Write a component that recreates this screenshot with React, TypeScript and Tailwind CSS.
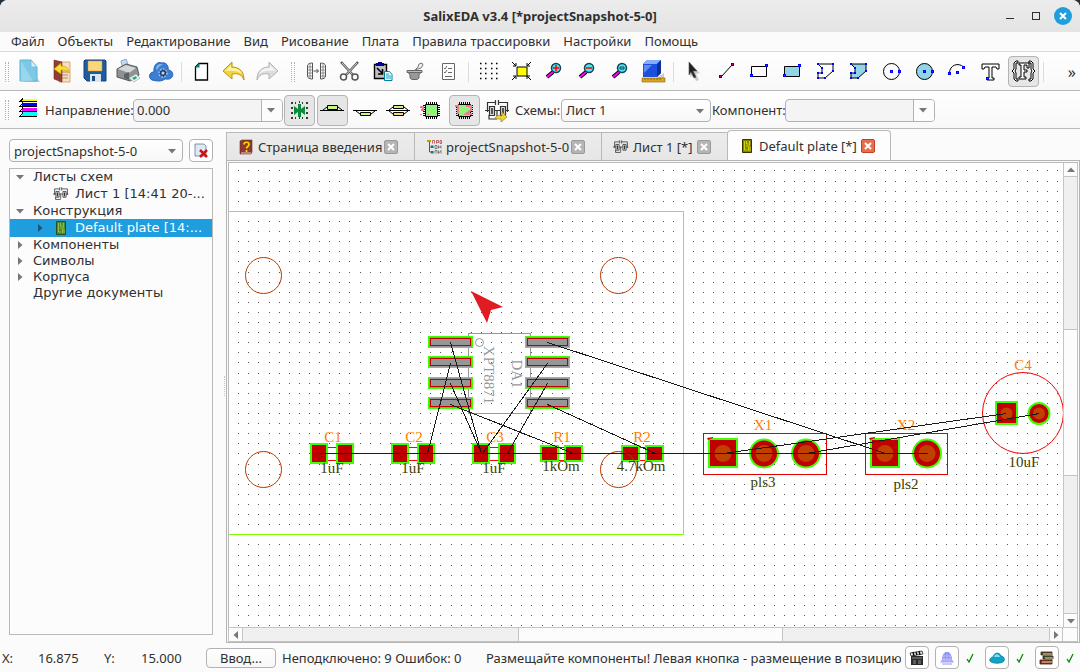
import { ReactNode, useMemo, useState } from 'react';

const icons: Record<string, ReactNode> = {
  file: (
    <>
      <path d="M5 23h18l-2-3" fill="#c9c9c9" />
      <path d="M3 1h11l6 7v14H3z" fill="#7cc8e6" stroke="#5fb2d4" />
      <path d="M14 1v7h6z" fill="#d3effa" stroke="#5fb2d4" strokeWidth=".6" />
      <path d="M4 2l12 20H4z" fill="#a5dcf1" opacity=".7" />
    </>
  ),
  exit: (
    <>
      <path d="M9 3h11v20H9z" fill="#f5dfc0" stroke="#d7a878" />
      <path d="M12 13h6M12 16h6M12 19h6" stroke="#a98c6c" />
      <path d="M4 1l8 2v20l-8-3z" fill="#933c33" stroke="#6e2822" strokeWidth=".6" />
      <path d="M4 10l7-6v3c5 0 8 2 8 7-2-3-4-3-8-3v4z" fill="#ffdf2e" stroke="#c99a00" strokeWidth=".7" />
    </>
  ),
  save: (
    <>
      <path d="M2 1h20l1 1v20H4l-3-3V2z" fill="#1d5c9e" stroke="#12457c" />
      <path d="M5 2h14v10H5z" fill="#fbd77c" stroke="#c8932d" strokeWidth=".5" />
      <path d="M7 15h11v8H7z" fill="#d9e4ee" />
      <path d="M9 17h3v5H9z" fill="#1c4c80" />
    </>
  ),
  print: (
    <>
      <path d="M5 2l5-2 3 8-6 3z" fill="#c4dcf2" stroke="#6489af" strokeWidth=".7" />
      <path d="M1 10l9-5 11 3 2 8-9 6L1 18z" fill="#8f9294" stroke="#55585a" />
      <path d="M2 10l8-4 10 3-7 5z" fill="#d4d6d7" />
      <path d="M8 15l5-2v8l-5-2z" fill="#606264" />
      <path d="M13 19l7-4 4 4-6 4z" fill="#eef4ff" stroke="#8894a4" strokeWidth=".6" />
      <path d="M16 19l4-2 1 2-3 2z" fill="#2cae5a" />
    </>
  ),
  cloud: (
    <>
      <path d="M3 21c-4-2-3-8 2-8C4 6 9 2 13 4c4-1 7 3 6 7 4 0 6 4 4 7-2 3-5 2-7 2-4 3-9 2-13 1z" fill="#3b7ed4" stroke="#2763b5" />
      <path d="M7 9c1-4 5-5 7-3-3 0-5 2-6 5z" fill="#8ab9f0" />
      <circle cx="14" cy="14" r="4" fill="#1f4473" stroke="#9dbce1" strokeWidth="1.5" strokeDasharray="2 1" />
      <circle cx="14" cy="14" r="1.5" fill="#c5d7ec" />
    </>
  ),
  newDoc: (
    <>
      <path d="M10 4.500h8.500v16.500H6.500V8z" fill="#fff" stroke="#000" strokeWidth="1.300" />
      <path d="M6 8.500l4.500-4.500v4.500z" fill="#008080" />
    </>
  ),
  undo: (
    <>
      <path d="M1 12l9-9v5c7 0 12 4 12 13-2-5-5-7-12-6v5z" fill="#f3d43a" stroke="#b8941a" />
      <path d="M3 12l6-6v3c5 0 9 1 11 6-4-3-8-4-17-3z" fill="#fff3a0" />
    </>
  ),
  redo: (
    <>
      <path d="M23 12l-9-9v5C7 8 2 12 2 21c2-5 5-7 12-6v5z" fill="#dcdcdc" stroke="#b4b4b4" />
      <path d="M21 12l-6-6v3c-5 0-9 1-11 6 4-3 8-4 17-3z" fill="#f4f4f4" />
    </>
  ),
  mirror: (
    <g fill="none" stroke="#555">
      <path d="M3.500 7c0-2 2-3 5-3v16c-3 0-5-1-5-3zM21.500 7c0-2-2-3-5-3v16c3 0 5-1 5-3zM9.500 12h5M12.500 10l2 2-2 2" />
      <path d="M6 5v15M19 5v15M4 8h4M4 11h4M4 14h4M4 17h4M17 8h4M17 11h4M17 14h4M17 17h4" strokeWidth=".6" />
    </g>
  ),
  cut: (
    <g fill="none" stroke="#555" strokeWidth="1.500">
      <path d="M4 3l12 13M21 3L9 16" strokeWidth="2.500" />
      <path d="M5 4l11 12M20 4L9 16" stroke="#eee" strokeWidth=".8" />
      <circle cx="6.500" cy="18" r="3" />
      <circle cx="18" cy="18" r="3" />
    </g>
  ),
  copy: (
    <>
      <path d="M4.500 5.500h12v14h-12z" fill="#c0c0c0" stroke="#000" strokeWidth="1.400" />
      <path d="M6 4h2V3h4v1h2v3H6z" fill="#0000a0" />
      <path d="M7 9l5 5M12.500 10v5H8" stroke="#000" strokeWidth="1.600" fill="none" />
      <path d="M14.500 12.500h5l2.500 3v6h-7.500z" fill="#fff" stroke="#0080a0" />
      <path d="M16 15h3M16 17h5M16 19h5" stroke="#00a0c0" />
    </>
  ),
  paint: (
    <>
      <path d="M5 13h13l-2 3v3l-2 1.500H9L7 19v-3z" fill="#999" stroke="#666" />
      <path d="M4 11.500h15v2H4z" fill="#bbb" stroke="#666" />
      <path d="M12 11l3-3 1-3 3-1 1 2-2 3-3 1z" fill="#eee" stroke="#777" />
    </>
  ),
  list: (
    <g fill="none" stroke="#666">
      <path d="M6.500 4.500h12v16h-12zM12 9.500h4M12 13.500h4M9 17.500h7" />
      <path d="M8 9l1 1 2-3M8 13l1 1 2-3" />
    </g>
  ),
  grid: (
    <path
      d="M4 4.500h1.500M9 4.500h1.500M15 4.500h1.500M20 4.500h1.500M4 9.500h1.500M9 9.500h1.500M15 9.500h1.500M20 9.500h1.500M4 14.500h1.500M9 14.500h1.500M15 14.500h1.500M20 14.500h1.500M4 19.500h1.500M9 19.500h1.500M15 19.500h1.500M20 19.500h1.500"
      stroke="#000"
      strokeWidth="1.500"
    />
  ),
  fit: (
    <g fill="none" stroke="#000">
      <path d="M8 8h10v9H8z" fill="#ff0" />
      <path d="M3 3l4 4M7 4v3H4M22 3l-4 4M18 4v3h3M3 21l4-4M4 17h3v3M22 21l-4-4M21 17h-3v3" />
    </g>
  ),
  zoomIn: (
    <>
      <path d="M5 18l6-5" stroke="#000" strokeWidth="4" />
      <path d="M5 18l6-5" stroke="#f0f" strokeWidth="2" />
      <circle cx="14" cy="9" r="4.500" fill="#4fe6f2" stroke="#145" strokeWidth="1.500" />
      <path d="M11 9h6M14 6v6" stroke="#f00" strokeWidth="1.500" />
    </>
  ),
  zoomOut: (
    <>
      <path d="M5 18l6-5" stroke="#000" strokeWidth="4" />
      <path d="M5 18l6-5" stroke="#f0f" strokeWidth="2" />
      <circle cx="14" cy="9" r="4.500" fill="#4fe6f2" stroke="#145" strokeWidth="1.500" />
      <path d="M11 9h6" stroke="#f00" strokeWidth="1.500" />
    </>
  ),
  zoomFit: (
    <>
      <path d="M5 18l6-5" stroke="#000" strokeWidth="4" />
      <path d="M5 18l6-5" stroke="#f0f" strokeWidth="2" />
      <circle cx="14" cy="9" r="4.500" fill="#4fe6f2" stroke="#145" strokeWidth="1.500" />
      <path d="M12 8h4v2h-4z" fill="none" stroke="#046" />
    </>
  ),
  cube: (
    <>
      <path d="M16 19l7-5v5z" fill="#ccc" />
      <path d="M2 5l4-4h14v13l-4 4H2z" fill="#1c50dc" />
      <path d="M2 5l4-4h14l-4 4z" fill="#86acff" />
      <path d="M16 5l4-4v13l-4 4z" fill="#0d2f9b" />
      <path d="M3 6l8 0-8 8z" fill="#5c8cf8" />
      <path d="M1 19h23v4H1z" fill="#d9a520" stroke="#8a6410" strokeWidth=".6" />
      <path d="M4 19v2M7 19v2M10 19v2M13 19v2M16 19v2M19 19v2" stroke="#6b4a00" strokeWidth=".6" />
    </>
  ),
  cursor: (
    <>
      <path d="M10 6l9 8-4 1 3 6-3 1-3-6-3 2z" fill="#aaa" opacity=".6" />
      <path d="M8 3l8 9-4 0 3 6-2 1-3-6-2 3z" fill="#222" stroke="#555" strokeWidth=".6" />
    </>
  ),
  line: (
    <>
      <path d="M7 18L18 6" stroke="#000" />
      <Dots at={[[6, 17], [18, 5]]} />
    </>
  ),
  rect: (
    <>
      <path d="M4.500 7.500h15v10h-15z" fill="none" stroke="#000" />
      <Dots at={[[4, 16], [19, 6]]} />
    </>
  ),
  fillRect: (
    <>
      <path d="M4.500 7.500h15v10h-15z" fill="#92d5e8" stroke="#000" />
      <Dots at={[[4, 16], [19, 6]]} />
    </>
  ),
  poly: (
    <>
      <path d="M5 5h15v7l-8 7H5v-5h4V9z" fill="none" stroke="#000" />
      <Dots small at={[[4, 4], [19, 4], [19, 11], [11, 18], [4, 18], [4, 13], [8, 13], [8, 8]]} />
    </>
  ),
  fillPoly: (
    <>
      <path d="M5 5h15v7l-8 7H5v-5h4V9z" fill="#92d5e8" stroke="#000" />
      <Dots small at={[[4, 4], [19, 4], [19, 11], [11, 18], [4, 18], [4, 13], [8, 13], [8, 8]]} />
    </>
  ),
  circle: (
    <>
      <circle cx="12.500" cy="12.500" r="8" fill="none" stroke="#000" />
      <Dots at={[[12, 12], [20, 12]]} />
    </>
  ),
  fillCircle: (
    <>
      <circle cx="12.500" cy="12.500" r="8" fill="#92d5e8" stroke="#000" />
      <Dots at={[[12, 12], [20, 12]]} />
    </>
  ),
  arc: (
    <>
      <path d="M4.500 14c0-8 9-11 14-6" fill="none" stroke="#000" />
      <Dots at={[[4, 14], [12, 13], [18, 8]]} />
    </>
  ),
  text: (
    <>
      <path d="M4 5h17v5h-2l-1-2h-4v11h2v2H9v-2h2V8H7l-1 2H4z" fill="#fff" stroke="#000" />
      <Dots at={[[9, 19]]} />
    </>
  ),
  param: (
    <g fill="#fff" stroke="#000">
      <path d="M7 2H5L3 4v6l-2 2 2 2v6l2 2h2v-2H5v-6l-1-2 1-2V4h2zM18 2h2l2 2v6l2 2-2 2v6l-2 2h-2v-2h2v-6l1-2-1-2V4h-2z" />
      <path d="M8 4h10v5h-2V6h-3v5h3v2h-3v5h2v2H8v-2h2V6H8z" />
    </g>
  ),
  layers: (
    <g shapeRendering="crispEdges">
      <path d="M7 1h15v3H7z" fill="#ff0" />
      <path d="M7 5h15v4H7z" fill="#00f" />
      <path d="M7 10h15v3H7z" fill="#f0f" />
      <path d="M7 14h15v4H7z" fill="#0ff" />
      <path d="M22 3.500H5l3-3M22 8.500H5l3-4M22 13.500H5l3-4M22 18.500H5l3-4" fill="none" stroke="#000" />
    </g>
  ),
  snap: (
    <>
      <path
        d="M4 5h2M8 5h1M15 5h1M19 5h2M4 10h2M19 10h2M4 15h2M19 15h2M4 20h2M8 20h1M15 20h1M19 20h2M12 4h1M12 20h1"
        stroke="#000"
        strokeWidth="1.500"
      />
      <path d="M7 8l4 3V6h3v5l4-3v9l-4-3v5h-3v-5l-4 3z" fill="#0b8a3a" />
    </>
  ),
  top: (
    <>
      <path d="M0 12.500h24" stroke="#000" />
      <path d="M3 12l4-3h11l4 3" fill="none" stroke="#000" />
      <path d="M7.500 7.500h10v4h-10z" fill="#c8f77f" stroke="#000" />
    </>
  ),
  bottom: (
    <>
      <path d="M0 12.500h24" stroke="#000" />
      <path d="M3 13l4 3h11l4-3" fill="none" stroke="#000" />
      <path d="M7.500 14.500h10v3h-10z" fill="#c8f77f" stroke="#000" />
    </>
  ),
  both: (
    <>
      <path d="M0 12.500h24M3 12l4-3h11l4 3M3 13l4 3h11l4-3" fill="none" stroke="#000" />
      <path d="M7.500 7.500h10v3h-10z" fill="#c8f77f" stroke="#000" />
      <path d="M7.500 14.500h10v3h-10z" fill="#ffd37a" stroke="#000" />
    </>
  ),
  chip: <Chip mark="M1 9h3v3H2M2 16v1M9 16v1" />,
  chipNum: <Chip mark="M3 8h3v8M9 17v1M14 8h5v4l-5 4h6" />,
  schematic: (
    <>
      <Schematic />
      <path d="M10 20c2-3 4-3 7-2v-4l5 5-6 5v-3c-3 0-4 0-6-1z" fill="#f1d23b" stroke="#97811f" strokeWidth=".7" />
    </>
  ),
};

const mainTools: [string, string][] = [
  ['file', 'Новый'], ['exit', 'Открыть'], ['save', 'Сохранить'], ['print', 'Печать'], ['cloud', 'Облако'], ['|', ''],
  ['newDoc', 'Лист'], ['undo', 'Отменить'], ['redo', 'Повторить'], ['::', ''],
  ['mirror', 'Отразить'], ['cut', 'Вырезать'], ['copy', 'Копировать'], ['paint', 'Вставить'], ['list', 'Свойства'], ['|', ''],
  ['grid', 'Сетка'], ['fit', 'Вписать'], ['zoomIn', 'Увеличить'], ['zoomOut', 'Уменьшить'], ['zoomFit', 'Масштаб'], ['cube', '3D'], ['|', ''],
  ['cursor', 'Выбор'], ['line', 'Линия'], ['rect', 'Прямоугольник'], ['fillRect', 'Закрашенный прямоугольник'],
  ['poly', 'Полигон'], ['fillPoly', 'Закрашенный полигон'], ['circle', 'Окружность'], ['fillCircle', 'Круг'],
  ['arc', 'Дуга'], ['text', 'Текст'], ['param', 'Параметр'], ['|', ''],
];

const plateTools: [string, string][] = [
  ['snap', 'Привязка'], ['top', 'Верх'], ['bottom', 'Низ'], ['both', 'Обе стороны'], ['chip', 'Корпус'], ['chipNum', 'Номера'], ['schematic', 'Схема'],
];

const menus = ['Файл', 'Объекты', 'Редактирование', 'Вид', 'Рисование', 'Плата', 'Правила трассировки', 'Настройки', 'Помощь'];

// smd pads: x, y, w, h
const smdPads = [
  [311, 444, 16, 19], [337, 444, 16, 19],
  [392, 444, 16, 19], [418, 444, 16, 19],
  [473, 444, 16, 19], [499, 444, 16, 19],
  [541, 446, 17, 15], [565, 446, 17, 15],
  [622, 446, 17, 15], [646, 446, 17, 15],
];

const bodies = [328, 409, 490, 559, 640];
const icRows = [337, 357, 378, 398];
const pins = [[764, 453], [806, 453], [927, 453]];

const wires = [
  [319, 453, 927, 453],
  [450, 342, 481, 453], [450, 363, 427, 453], [450, 383, 481, 453], [450, 404, 573, 453],
  [547, 342, 885, 453], [547, 363, 482, 453], [547, 383, 507, 453], [547, 404, 655, 453],
  [723, 453, 1006, 413], [806, 453, 1039, 413],
];

const names: [string, number, number][] = [
  ['C1', 333, 442], ['C2', 414, 442], ['C3', 495, 442], ['R1', 562, 442], ['R2', 642, 442], ['X1', 763, 430], ['X2', 906, 430], ['C4', 1023, 370],
];
const values: [string, number, number][] = [
  ['1uF', 332, 473], ['1uF', 413, 473], ['1uF', 494, 473], ['1kOm', 561, 471], ['4.7kOm', 641, 471], ['pls3', 763, 487], ['pls2', 906, 489], ['10uF', 1024, 467],
];

function Dots({ at, small }: { at: number[][]; small?: boolean }) {
  return (
    <g shapeRendering="crispEdges">
      {at.map(([x, y]) => small
        ? <path key={`${x}-${y}`} d={`M${x} ${y}h2v2h-2z`} fill="#00f" />
        : <path key={`${x}-${y}`} d={`M${x - 0.5} ${y - 0.5}h2v2h-2z`} fill="#c0007f" stroke="#00f" />)}
    </g>
  );
}

function Chip({ mark }: { mark: string }) {
  return (
    <>
      <path d="M7.500 4v17M9.500 4v17M11.500 4v17M13.500 4v17M15.500 4v17M17.500 4v17M4 7.500h17M4 9.500h17M4 11.500h17M4 13.500h17M4 15.500h17M4 17.500h17" stroke="#000" />
      <path d="M6.500 6.500h12v12h-12z" fill="#8ff57a" stroke="#000" />
      <path d={mark} fill="none" stroke="#f0788c" strokeWidth="2" />
    </>
  );
}

function Schematic() {
  return (
    <g fill="none" stroke="#333" strokeWidth="1.200">
      <path d="M10.500 4.500H2.500V14M10.500 2v5M13.500 2v5M13.500 4.500h9V14M0 12.500h24M4 17v4h8M12 20v-8" />
      <path d="M4.500 8.500h5v9h-5zM15.500 8.500h5v9h-5z" fill="#ddd" />
      <path d="M7 10v6M18 10v6" strokeWidth="1.600" />
    </g>
  );
}

function Handle() {
  return (
    <span className="flex w-3 shrink-0 gap-[2px] pl-[5px]">
      <span className="h-5 w-px border-l border-dotted border-[#b0b0b0]" />
      <span className="h-5 w-px border-l border-dotted border-[#b0b0b0]" />
    </span>
  );
}

function Tool({ name, label, on }: { name: string; label: string; on?: boolean }) {
  return (
    <button
      type="button"
      aria-label={label}
      className={`flex h-[31px] w-[31px] shrink-0 items-center justify-center rounded-sm border ${on ? 'border-[#b4b4b4] bg-[#e6e6e6]' : 'border-transparent'}`}
    >
      <svg viewBox="0 0 25 25" className="h-[25px] w-[25px] shrink-0">{icons[name]}</svg>
    </button>
  );
}

function Arrow({ className }: { className: string }) {
  return (
    <svg viewBox="0 0 8 8" className={`h-2 w-2 shrink-0 ${className}`}>
      <path d="M0 2h8L4 6.500z" fill="currentColor" />
    </svg>
  );
}

function Combo({ id, value }: { id: string; value: string }) {
  return (
    <div className="flex h-[23px] w-[150px] shrink-0 overflow-hidden rounded-sm border border-[#b2b2b2] bg-[#f4f4f4]">
      <input id={id} defaultValue={value} className="min-w-0 flex-1 px-[3px] outline-none" />
      <button type="button" aria-label="Список" className="flex w-[21px] items-center justify-center border-l border-[#b2b2b2] bg-[#fcfcfc] pr-[2px] text-[#777]">
        <Arrow className="" />
      </button>
    </div>
  );
}

function Select({ id, value, className }: { id: string; value: string; className: string }) {
  return (
    <div className={`relative shrink-0 ${className}`}>
      <select id={id} aria-label={value} className="h-[23px] w-full appearance-none rounded-sm border border-[#b2b2b2] bg-gradient-to-b from-white to-[#f7f7f7] pl-1 outline-none">
        <option>{value}</option>
      </select>
      <Arrow className="pointer-events-none absolute top-2 right-[7px] text-[#777]" />
    </div>
  );
}

function TabIcon({ kind }: { kind: string }) {
  if (kind === 'sheet') {
    return <svg viewBox="0 0 25 25" className="h-4 w-4 shrink-0"><Schematic /></svg>;
  }
  return (
    <svg viewBox="0 0 16 16" className="h-4 w-4 shrink-0">
      {kind === 'help' && (
        <>
          <path d="M2 2l2-1h10v12l-1 2H2z" fill="#8c3931" stroke="#6b2b25" strokeWidth=".6" />
          <path d="M3 14h10" stroke="#e9d6c7" />
          <path d="M6 5.500c0-3 5-3 5 0 0 2-2.500 2-2.500 4M8.500 11v2" fill="none" stroke="#ffd800" strokeWidth="1.700" />
        </>
      )}
      {kind === 'project' && (
        <>
          <path d="M3.500 2v11h3M3.500 8h3M1 2h4" stroke="#555" fill="none" />
          <path d="M2 1h3v2H2z" fill="#b59b00" />
          <path d="M6.500 4.500v-3h2v3M10.500 4.500v-3h2v2h-2M14 1.500h1.500v3H14z" fill="none" stroke="#b03030" strokeWidth=".7" />
          <path d="M5 6.500h2.500V9H5zM5 12h2.500v2.500H5z" fill="#008080" />
          <path d="M9 6.500h2v3H9zM12.500 6.500v3M15 6.500v3M12.500 8H15M9 14.500v-3h2v3M12.500 11.500v3l2.500-3v3" fill="none" stroke="#555" strokeWidth=".7" />
        </>
      )}
      {kind === 'plate' && (
        <>
          <path d="M3.500 1.500h9v13h-9z" fill="#848400" stroke="#333300" />
          <path d="M5.500 3v9H8M7.500 3v3h2M10.500 3v4M9.500 9v4M11 9v4M7 8h4" fill="none" stroke="#e6e600" strokeWidth=".8" />
        </>
      )}
      {kind === 'plateSel' && (
        <>
          <path d="M3.500 1.500h9v13h-9z" fill="#4d8a2a" stroke="#2a4d22" />
          <path d="M5.500 3v9H8M7.500 3v3h2M10.500 3v4M9.500 9v4M11 9v4M7 8h4" fill="none" stroke="#a2cc50" strokeWidth=".8" />
        </>
      )}
    </svg>
  );
}

function Tab({ kind, title, active, className, onSelect }: { kind: string; title: string; active: boolean; className: string; onSelect: () => void }) {
  return (
    <div
      className={`flex shrink-0 items-center border-[#b9b9b9] ${className} ${active
        ? '-mb-px h-[31px] rounded-t-sm border border-b-0 bg-[#fdfdfd]'
        : 'h-7 border-t border-l bg-gradient-to-b from-[#ececec] to-[#e6e6e6]'}`}
    >
      <button type="button" onClick={onSelect} className="flex min-w-0 items-center gap-1 whitespace-nowrap">
        <TabIcon kind={kind} />
        {title}
      </button>
      <button
        type="button"
        aria-label={`Закрыть ${title}`}
        className={`ml-auto flex h-[14px] w-[14px] shrink-0 items-center justify-center rounded-[2px] border ${active ? 'border-[#cf3b20] bg-[#e2704f]' : 'border-[#999] bg-[#b5b5b5]'}`}
      >
        <svg viewBox="0 0 8 8" className="h-2 w-2"><path d="M1 1l6 6M7 1L1 7" stroke="#fff" strokeWidth="2" /></svg>
      </button>
    </div>
  );
}

function TreeRow({ text, level = 0, arrow, icon, selected }: { text: string; level?: number; arrow?: 'open' | 'closed'; icon?: string; selected?: boolean }) {
  return (
    <li className={`flex items-center ${icon ? 'h-[18px]' : 'h-4'} ${level ? 'pl-[26px]' : 'pl-[6px]'} ${selected ? 'bg-[#1e9ddf] text-white' : ''}`}>
      <span className="flex w-[17px] shrink-0">
        {arrow && <Arrow className={`${arrow === 'closed' ? '-rotate-90' : ''} ${selected ? 'text-[#1a567c]' : 'text-[#777]'}`} />}
      </span>
      {icon && <span className="mr-[6px] shrink-0"><TabIcon kind={icon} /></span>}
      <span className="whitespace-nowrap">{text}</span>
    </li>
  );
}

function Board() {
  const grid = useMemo(() => {
    let d = '';
    for (let r = 0; r < 70; r++) {
      const y = Math.round(170.4 + r * 10.11);
      for (let c = 0; c < 120; c++) d += `M${Math.round(238.2 + c * 10.11)} ${y}h1v1h-1z`;
    }
    return d;
  }, []);

  return (
    <svg className="block h-full w-full bg-white" role="img" aria-label="Default plate">
      <g transform="translate(-229 -163)">
        <path d={grid} fill="#555" shapeRendering="crispEdges" />
        <g fill="none" shapeRendering="crispEdges">
          <path d="M220 211.500h463.500v323H220" stroke="#80ff00" />
          <path d="M468.500 333.500h62v80h-62z" stroke="#999" />
          {bodies.map(x => <path key={x} d={`M${x} 447.500h8M${x} 460.500h8`} stroke="#f00" />)}
          <path d="M703.500 433.500h123v41h-123zM865.500 433.500h82v41h-82z" stroke="#e00000" />
        </g>
        <g fill="#c00000" stroke="#40ff00" strokeWidth="2" shapeRendering="crispEdges">
          {smdPads.map(([x, y, w, h]) => <rect key={x} x={x} y={y} width={w} height={h} />)}
          <rect x="709" y="439" width="28" height="28" />
          <rect x="871" y="439" width="28" height="28" />
          <rect x="996" y="402" width="21" height="22" />
        </g>
        <path d="M707 438l6-1v1l-5 2zM869 438l6-1v1l-5 2z" fill="#e00000" />
        <g shapeRendering="crispEdges">
          {icRows.map(y => [429, 526].map(x => (
            <g key={`${x}-${y}`}>
              <rect x={x - 0.5} y={y - 0.5} width="44" height="11" fill="#969696" stroke="#40ff00" />
              <rect x={x + 1.5} y={y + 1.5} width="40" height="7" fill="none" stroke="#c00000" />
            </g>
          )))}
        </g>
        <g fill="#c00000" stroke="#40ff00" strokeWidth="2">
          {pins.map(([x, y]) => <circle key={x} cx={x} cy={y + 0.5} r="14" />)}
          <circle cx="1039" cy="413.500" r="10.500" />
        </g>
        <g fill="#c04000">
          {[...pins, [723, 453], [885, 453]].map(([x, y]) => <circle key={x} cx={x} cy={y + 0.5} r="8.500" />)}
          <circle cx="1006.500" cy="413.500" r="6" />
          <circle cx="1039" cy="413.500" r="6" />
        </g>
        <g fill="none">
          {[[263.5, 275.5], [618.5, 275.5], [263.5, 469.5], [618.5, 469.5]].map(([x, y]) => (
            <circle key={`${x}-${y}`} cx={x} cy={y} r="18" stroke="#b83a00" />
          ))}
          <circle cx="1023" cy="413" r="40.500" stroke="#f00000" />
          <circle cx="479.500" cy="342.500" r="4" stroke="#999" />
        </g>
        <g fontFamily="'Liberation Serif', serif" fontSize="15" textAnchor="middle">
          <g fill="#ff8000">
            {names.map(([t, x, y]) => <text key={t} x={x} y={y}>{t}</text>)}
          </g>
          <g fill="#404000">
            {values.map(([t, x, y]) => <text key={x} x={x} y={y}>{t}</text>)}
          </g>
          <g fill="#999">
            <text transform="translate(484 375) rotate(90)">XPT8871</text>
            <text transform="translate(512 374) rotate(90)">DA1</text>
          </g>
        </g>
        <g stroke="#1a1a1a" shapeRendering="crispEdges">
          {wires.map(([x1, y1, x2, y2], i) => <path key={i} d={`M${x1 + 0.5} ${y1 + 0.5}L${x2 + 0.5} ${y2 + 0.5}`} />)}
        </g>
        <path d="M471 291l32 16-12 3-4 13z" fill="#e01b24" />
      </g>
    </svg>
  );
}

function StatusButton({ label, children }: { label: string; children: ReactNode }) {
  return (
    <button type="button" aria-label={label} className="flex h-[23px] w-6 shrink-0 items-center justify-center rounded-sm border border-[#b2b2b2] bg-white">
      <svg viewBox="0 0 16 16" className="h-4 w-4">{children}</svg>
    </button>
  );
}

function Check() {
  return (
    <svg viewBox="0 0 10 10" className="h-[10px] w-[10px] shrink-0">
      <path d="M2 6l2 3 4-8" fill="none" stroke="#008a00" strokeWidth="1.300" />
    </svg>
  );
}

export default function App() {
  const [tab, setTab] = useState(3);
  const tabs = [
    { kind: 'help', title: 'Страница введения', className: 'w-[188px] pr-4 pl-[11px]' },
    { kind: 'project', title: 'projectSnapshot-5-0', className: 'w-[187px] pr-4 pl-[11px]' },
    { kind: 'sheet', title: 'Лист 1 [*]', className: 'w-[126px] pr-4 pl-[11px]' },
    { kind: 'plate', title: 'Default plate [*]', className: 'w-[164px] pr-[15px] pl-[11px]' },
  ];

  return (
    <div className="h-screen bg-[#24303c]">
      <div className="flex h-full flex-col overflow-hidden rounded-t-lg bg-[#fbfbfb] font-['Noto_Sans',sans-serif] text-[13px] leading-4 text-[#303030]">
        <header className="flex h-8 shrink-0 items-center bg-gradient-to-b from-[#ececec] to-[#e4e4e4] px-2">
          <div className="w-20" />
          <h1 className="flex-1 text-center font-bold">SalixEDA v3.4 [*projectSnapshot-5-0]</h1>
          <div className="flex w-20 items-center justify-end gap-[14px]">
            <button type="button" aria-label="Свернуть" className="flex h-4 w-4 items-center justify-center">
              <span className="mt-[5px] h-px w-2 bg-[#303030]" />
            </button>
            <button type="button" aria-label="Развернуть" className="h-2 w-2 border border-[#303030]" />
            <button type="button" aria-label="Закрыть" className="flex h-[18px] w-[18px] items-center justify-center rounded-full bg-[#1e9ddf]">
              <svg viewBox="0 0 8 8" className="h-2 w-2"><path d="M1 1l6 6M7 1L1 7" stroke="#fff" strokeWidth="2" /></svg>
            </button>
          </div>
        </header>

        <nav className="flex h-5 shrink-0 items-center gap-[13px] border-b border-[#dadada] bg-[#fbfbfb] pb-px pl-[11px]">
          {menus.map(m => <button key={m} type="button" className="whitespace-nowrap">{m}</button>)}
        </nav>

        <div className="flex h-[39px] shrink-0 items-center gap-[2px] border-b border-[#b9b9b9] bg-gradient-to-b from-white to-[#f8f8f8] pt-px pr-1">
          <Handle />
          {mainTools.map(([name, label], i) => {
            if (name === '|') return <span key={i} className="mx-[2px] h-5 w-px shrink-0 bg-[#dcdcdc]" />;
            if (name === '::') return <span key={i} className="mx-px"><Handle /></span>;
            return <Tool key={i} name={name} label={label} on={name === 'param'} />;
          })}
          <button type="button" aria-label="Ещё" className="ml-auto text-[16px]">»</button>
        </div>

        <div className="flex h-[38px] shrink-0 items-center border-b border-[#b9b9b9] bg-gradient-to-b from-white to-[#f8f8f8] pt-px">
          <Handle />
          <Tool name="layers" label="Слои" />
          <label htmlFor="direction" className="w-[90px] shrink-0 pl-[2px]">Направление:</label>
          <Combo id="direction" value="0.000" />
          <div className="ml-px flex gap-[2px]">
            {plateTools.map(([name, label]) => (
              <Tool key={name} name={name} label={label} on={name === 'snap' || name === 'top' || name === 'chipNum'} />
            ))}
          </div>
          <label htmlFor="sheets" className="w-12 shrink-0 pl-[2px]">Схемы:</label>
          <Select id="sheets" value="Лист 1" className="w-[150px]" />
          <label htmlFor="component" className="w-[74px] shrink-0 pl-px">Компонент:</label>
          <Combo id="component" value="" />
        </div>

        <div className="flex min-h-0 flex-1">
          <aside className="flex w-[213px] shrink-0 flex-col pt-[10px] pb-2 pl-[9px]">
            <div className="flex justify-between">
              <Select id="project" value="projectSnapshot-5-0" className="w-[174px]" />
              <StatusButton label="Закрыть проект">
                <path d="M2 1h9l2 2v10H2z" fill="#dfe9f5" stroke="#667a91" strokeWidth=".8" />
                <path d="M7 7l7 7M14 7l-7 7" stroke="#d41111" strokeWidth="2.500" />
              </StatusButton>
            </div>
            <ul className="mt-[6px] min-h-0 flex-1 overflow-hidden border border-[#b9b9b9] bg-[#fcfcfc] font-['DejaVu_Sans',sans-serif]">
              <TreeRow text="Листы схем" arrow="open" />
              <TreeRow text="Лист 1 [14:41 20-..." level={1} icon="sheet" />
              <TreeRow text="Конструкция" arrow="open" />
              <TreeRow text="Default plate [14:..." level={1} arrow="closed" icon="plateSel" selected />
              <TreeRow text="Компоненты" arrow="closed" />
              <TreeRow text="Символы" arrow="closed" />
              <TreeRow text="Корпуса" arrow="closed" />
              <TreeRow text="Другие документы" />
            </ul>
          </aside>
          <div className="flex w-[13px] shrink-0 items-center justify-end pr-px">
            <span className="h-5 border-l border-dotted border-[#c4c4c4]" />
          </div>
          <main className="flex min-w-0 flex-1 flex-col pt-px">
            <div className="flex h-[30px] shrink-0 items-end">
              {tabs.map((t, i) => (
                <Tab key={t.title} {...t} active={tab === i} onSelect={() => setTab(i)} />
              ))}
            </div>
            <div className="flex min-h-0 flex-1 flex-col border border-[#b4b4b4] bg-[#fbfbfb] p-px pb-0">
              <div className="flex min-h-0 flex-1 border-t border-l border-[#b9b9b9]">
                <div className="min-w-0 flex-1 overflow-hidden"><Board /></div>
                <div className="flex w-[15px] shrink-0 flex-col border-x border-[#c4c4c4] bg-[#f0f0f0]">
                  <button type="button" aria-label="Вверх" className="flex h-[14px] items-center justify-center border-b border-[#c4c4c4] bg-[#fcfcfc] text-[#777]"><Arrow className="rotate-180" /></button>
                  <div className="flex-[153]" />
                  <div className="flex-[146] border-y border-[#c4c4c4] bg-[#fcfcfc]" />
                  <div className="flex-[138]" />
                  <button type="button" aria-label="Вниз" className="flex h-[14px] items-center justify-center border-t border-[#c4c4c4] bg-[#fcfcfc] text-[#777]"><Arrow className="" /></button>
                </div>
              </div>
              <div className="flex h-[15px] shrink-0 border border-[#c4c4c4] bg-[#f0f0f0]">
                <button type="button" aria-label="Влево" className="flex w-[14px] items-center justify-center border-r border-[#c4c4c4] bg-[#fcfcfc] text-[#777]"><Arrow className="rotate-90" /></button>
                <div className="flex-[276]" />
                <div className="flex-[264] border-x border-[#c4c4c4] bg-[#fcfcfc]" />
                <div className="flex-[267]" />
                <button type="button" aria-label="Вправо" className="flex w-[14px] items-center justify-center border-x border-[#c4c4c4] bg-[#fcfcfc] text-[#777]"><Arrow className="-rotate-90" /></button>
                <span className="w-[14px] bg-[#fcfcfc]" />
              </div>
            </div>
          </main>
        </div>

        <footer className="flex h-[29px] shrink-0 items-center pr-[5px] pl-[2px]">
          <span className="w-9 shrink-0">X:</span>
          <span className="w-[66px] shrink-0">16.875</span>
          <span className="w-[37px] shrink-0">Y:</span>
          <span className="w-[65px] shrink-0">15.000</span>
          <button type="button" className="h-5 w-[70px] shrink-0 rounded-sm border border-[#b2b2b2] bg-gradient-to-b from-white to-[#f7f7f7] leading-4">Ввод...</button>
          <span className="w-[206px] shrink-0 pl-[6px] whitespace-nowrap">Неподключено: 9 Ошибок: 0</span>
          <span className="mr-1 ml-1 min-w-0 flex-1 overflow-hidden whitespace-nowrap">
            Размещайте компоненты! Левая кнопка - размещение в позицию к
          </span>
          <div className="flex shrink-0 items-center gap-[6px]">
            <StatusButton label="Видео">
              <path d="M2 6h12v9H2z" fill="#2a2a2a" />
              <path d="M1 3l12-2 1 3-12 2z" fill="#eee" stroke="#222" strokeWidth=".8" />
              <path d="M4 2l1 4M7 2l1 3M10 1l1 4" stroke="#111" strokeWidth="1.500" />
              <path d="M3 8h10M4 11h3M9 11h3M4 13h3M9 13h3" stroke="#aaa" strokeWidth=".8" />
            </StatusButton>
            <StatusButton label="Сервер">
              <path d="M3 10c0-11 10-11 10 0z" fill="#8588f2" />
              <path d="M1 12.500l2-3h10l2 3z" fill="#a6a8f7" />
              <path d="M3 14h10" stroke="#b5b7f8" strokeWidth="1.500" />
              <path d="M8 2v9M5 3v8M11 3v8M3 6h10M3 9h10" stroke="#d9d9ff" strokeWidth=".6" />
            </StatusButton>
            <Check />
            <span className="ml-1 flex">
              <StatusButton label="Облако">
                <path d="M1 11c-1-3 2-4 3-4 1-5 7-5 8-1 3 0 4 3 3 5-2 3-12 3-14 0z" fill="#12a2c8" stroke="#08728f" strokeWidth=".7" />
                <path d="M5 7c1-4 5-3 6 0z" fill="#7ce3f4" />
              </StatusButton>
            </span>
            <Check />
            <span className="ml-1 flex">
              <StatusButton label="Библиотека">
                <path d="M2 2h11v3H2z" fill="#5b4a2a" stroke="#2d2414" strokeWidth=".8" />
                <path d="M4 6h10v3H4z" fill="#3f5b35" stroke="#2d2414" strokeWidth=".8" />
                <path d="M1 10h12v4H1z" fill="#8a3a26" stroke="#3a180e" strokeWidth=".8" />
                <path d="M4 4h9M6 8h8M3 12h10" stroke="#e8d5a5" />
              </StatusButton>
            </span>
            <Check />
          </div>
        </footer>
      </div>
    </div>
  );
}
